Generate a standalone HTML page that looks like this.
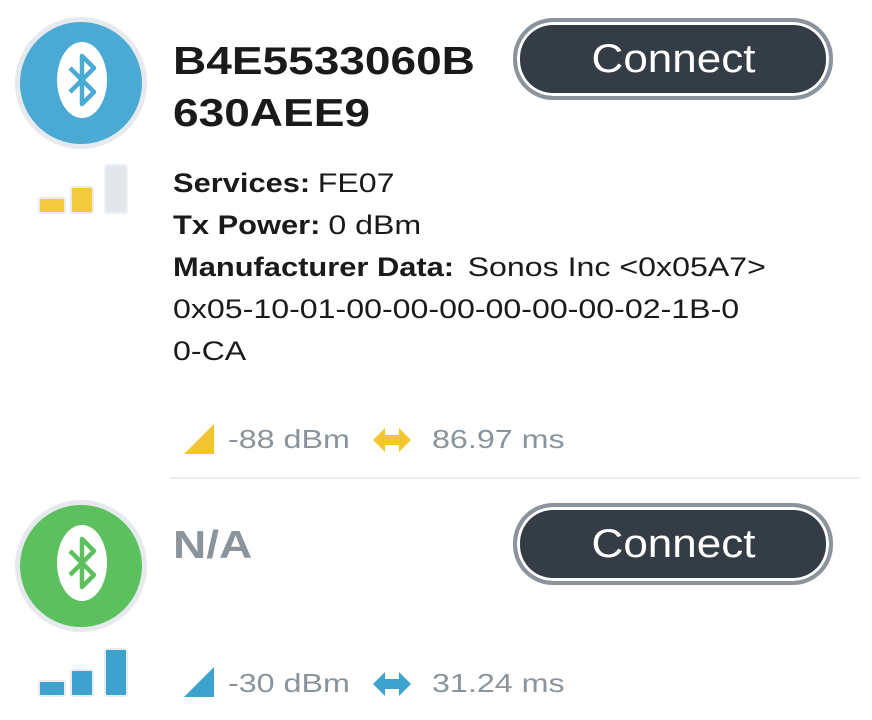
<!DOCTYPE html>
<html><head><style>
body{margin:0;width:872px;height:720px;background:#fff;font-family:"Liberation Sans",sans-serif;position:relative;overflow:hidden}
.a{position:absolute}
.circ{width:122px;height:122px;border-radius:50%;box-shadow:0 0 0 5px #e6eaee}
.btn{width:312px;height:74px;border-radius:40px;background:#343d46;border:4px solid #8b949c;box-shadow:inset 0 0 0 3px #fff;color:#fff;font-size:40px;text-align:center;line-height:74px}
.btn span{display:inline-block;transform:scaleX(1.1)}
.t{font-size:39px;font-weight:bold;color:#1a1a1a;line-height:52px;transform:scaleX(1.18);transform-origin:left top}
.d{font-size:27px;color:#1a1a1a;line-height:42px;transform:scaleX(1.19);transform-origin:left top;white-space:nowrap}
.d b{display:inline-block;transform:scaleX(0.96);transform-origin:left;margin-right:-6px}
.g{font-size:26px;color:#8b949b;transform:scaleX(1.24);transform-origin:left top}
</style></head><body>
<div class="a circ" style="left:20px;top:22px;background:#4aaad3"></div>
<svg class="a" style="left:50px;top:36px" width="64" height="90" viewBox="0 0 64 90"><ellipse cx="32" cy="44" rx="25" ry="38" fill="#fff"/><path d="M20 32 L44 56 L32 68 L32 20 L44 32 L20 56" fill="none" stroke="#4aaad3" stroke-width="4.5" stroke-linejoin="round"/></svg>
<div class="a t" style="left:173px;top:36px">B4E5533060B<br>630AEE9</div>
<div class="a btn" style="left:513px;top:18px"><span>Connect</span></div>
<div class="a" style="left:38px;top:197px;width:24px;height:13px;background:#f3cb3c;border:2px solid #e8ecf0;border-radius:3px"></div>
<div class="a" style="left:70px;top:186px;width:20px;height:24px;background:#f3cb3c;border:2px solid #e8ecf0;border-radius:3px"></div>
<div class="a" style="left:104px;top:164px;width:20px;height:46px;background:#e3e7eb;border:2px solid #eef1f4;border-radius:3px"></div>
<div class="a d" style="left:173px;top:162px"><b>Services:</b> FE07<br><b>Tx Power:</b> 0 dBm<br><b>Manufacturer Data:</b> Sonos Inc &lt;0x05A7&gt;<br>0x05-10-01-00-00-00-00-00-00-02-1B-0<br>0-CA</div>
<svg class="a" style="left:182px;top:422px" width="34" height="34"><path d="M2 32 L32 2 L32 32Z" fill="#f3c531"/></svg>
<div class="a g" style="left:228px;top:424px">-88 dBm</div>
<svg class="a" style="left:371px;top:425px" width="42" height="30"><path d="M2 15 L14 3 L14 10 L28 10 L28 3 L40 15 L28 27 L28 20 L14 20 L14 27Z" fill="#f3c531"/></svg>
<div class="a g" style="left:432px;top:424px">86.97 ms</div>
<div class="a" style="left:170px;top:477px;width:690px;height:2px;background:#eceff1"></div>
<div class="a circ" style="left:20px;top:505px;background:#5cc05e"></div>
<svg class="a" style="left:50px;top:519px" width="64" height="90" viewBox="0 0 64 90"><ellipse cx="32" cy="44" rx="25" ry="38" fill="#fff"/><path d="M20 32 L44 56 L32 68 L32 20 L44 32 L20 56" fill="none" stroke="#5cc05e" stroke-width="4.5" stroke-linejoin="round"/></svg>
<div class="a t" style="left:173px;top:520px;color:#8b949b">N/A</div>
<div class="a btn" style="left:513px;top:503px"><span>Connect</span></div>
<div class="a" style="left:38px;top:680px;width:24px;height:13px;background:#3da2cd;border:2px solid #e8ecf0;border-radius:3px"></div>
<div class="a" style="left:70px;top:669px;width:20px;height:24px;background:#3da2cd;border:2px solid #e8ecf0;border-radius:3px"></div>
<div class="a" style="left:104px;top:648px;width:20px;height:45px;background:#3da2cd;border:2px solid #e8ecf0;border-radius:3px"></div>
<svg class="a" style="left:182px;top:665px" width="34" height="34"><path d="M2 32 L32 2 L32 32Z" fill="#3da2cd"/></svg>
<div class="a g" style="left:228px;top:668px">-30 dBm</div>
<svg class="a" style="left:371px;top:669px" width="42" height="30"><path d="M2 15 L14 3 L14 10 L28 10 L28 3 L40 15 L28 27 L28 20 L14 20 L14 27Z" fill="#3da2cd"/></svg>
<div class="a g" style="left:432px;top:668px">31.24 ms</div>
</body></html>
